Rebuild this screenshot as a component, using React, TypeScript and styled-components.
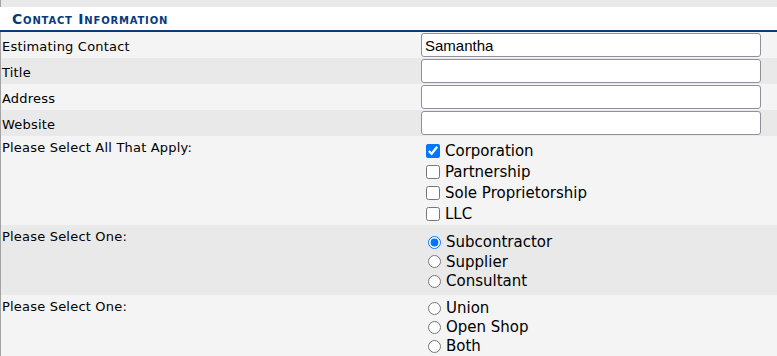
import { FC } from 'react';
import styled, { createGlobalStyle } from 'styled-components';

const GlobalStyle = createGlobalStyle`
  html, body {
    margin: 0;
    padding: 0;
    background: #ffffff;
  }
  body {
    font-family: "DejaVu Sans", Verdana, sans-serif;
    color: #000000;
  }
`;

const Page = styled.div`
  width: 777px;
  display: flex;
  flex-direction: column;
`;

const TopStrip = styled.div`
  height: 7px;
  background: #e9e9e9;
  border-left: 1px solid #a3a3a3;
`;

const SectionHeader = styled.div`
  height: 25px;
  display: flex;
  align-items: center;
  padding: 1px 0 0 12px;
  box-sizing: border-box;
  background: #ffffff;
  border-bottom: 2px solid #0d3b78;
  font-size: 14px;
  font-weight: bold;
  font-variant: small-caps;
  color: #063a7d;
  letter-spacing: 0.8px;
`;

const Row = styled.div<{ $shade: boolean; $top?: boolean }>`
  display: grid;
  grid-template-columns: 421px 1fr;
  align-items: ${p => (p.$top ? 'start' : 'center')};
  background: ${p => (p.$shade ? '#e9e9e9' : '#f4f4f4')};
  border-left: 1px solid #a3a3a3;
  min-height: 26px;
`;

const Label = styled.div<{ $top?: boolean }>`
  font-size: 13px;
  line-height: 15px;
  letter-spacing: 0.2px;
  padding: ${p => (p.$top ? '4px 0 0 1px' : '2px 0 0 1px')};
  white-space: nowrap;
`;

const Field = styled.div`
  padding: 1px 0;
`;

const TextBox = styled.input`
  box-sizing: border-box;
  display: block;
  width: 340px;
  height: 24px;
  margin-left: -1px;
  padding: 0 3px;
  border: 1px solid #8f8f9d;
  border-radius: 3px;
  background: #ffffff;
  font-family: "Liberation Sans", Arial, sans-serif;
  font-size: 15px;
  color: #000000;
  outline: none;
`;

const OptionList = styled.div<{ $padTop: number; $padBottom: number }>`
  display: flex;
  flex-direction: column;
  padding: ${p => `${p.$padTop}px 0 ${p.$padBottom}px`};
`;

const Option = styled.label<{ $lineHeight: number }>`
  display: flex;
  align-items: center;
  height: ${p => p.$lineHeight}px;
  font-size: 15px;
  white-space: nowrap;
`;

const Check = styled.input`
  width: 14px;
  height: 14px;
  margin: 0 5px 0 4px;
  accent-color: #0075ff;
`;

const Radio = styled.input`
  width: 13px;
  height: 13px;
  margin: 0 5px 0 6px;
  accent-color: #0075ff;
`;

type TOption = { text: string; checked?: boolean };

const entityTypes: TOption[] = [
  { text: 'Corporation', checked: true },
  { text: 'Partnership' },
  { text: 'Sole Proprietorship' },
  { text: 'LLC' },
];

const companyTypes: TOption[] = [
  { text: 'Subcontractor', checked: true },
  { text: 'Supplier' },
  { text: 'Consultant' },
];

const shopTypes: TOption[] = [{ text: 'Union' }, { text: 'Open Shop' }, { text: 'Both' }];

const textFields = [
  { label: 'Estimating Contact', value: 'Samantha' },
  { label: 'Title', value: '' },
  { label: 'Address', value: '' },
  { label: 'Website', value: '' },
];

const App: FC = () => {
  return (
    <Page>
      <GlobalStyle />
      <TopStrip />
      <SectionHeader>Contact Information</SectionHeader>

      {textFields.map((f, i) => (
        <Row key={f.label} $shade={i % 2 === 1}>
          <Label>{f.label}</Label>
          <Field>
            <TextBox type="text" defaultValue={f.value} />
          </Field>
        </Row>
      ))}

      <Row $shade={false} $top>
        <Label $top>Please Select All That Apply:</Label>
        <OptionList $padTop={4} $padBottom={0.5}>
          {entityTypes.map(o => (
            <Option key={o.text} $lineHeight={21}>
              <Check type="checkbox" defaultChecked={o.checked} />
              {o.text}
            </Option>
          ))}
        </OptionList>
      </Row>

      <Row $shade $top>
        <Label $top>Please Select One:</Label>
        <OptionList $padTop={8} $padBottom={4}>
          {companyTypes.map(o => (
            <Option key={o.text} $lineHeight={19.5}>
              <Radio type="radio" name="companyType" defaultChecked={o.checked} />
              {o.text}
            </Option>
          ))}
        </OptionList>
      </Row>

      <Row $shade={false} $top>
        <Label $top>Please Select One:</Label>
        <OptionList $padTop={3.5} $padBottom={2}>
          {shopTypes.map(o => (
            <Option key={o.text} $lineHeight={19}>
              <Radio type="radio" name="shopType" defaultChecked={o.checked} />
              {o.text}
            </Option>
          ))}
        </OptionList>
      </Row>
    </Page>
  );
};

export default App;
